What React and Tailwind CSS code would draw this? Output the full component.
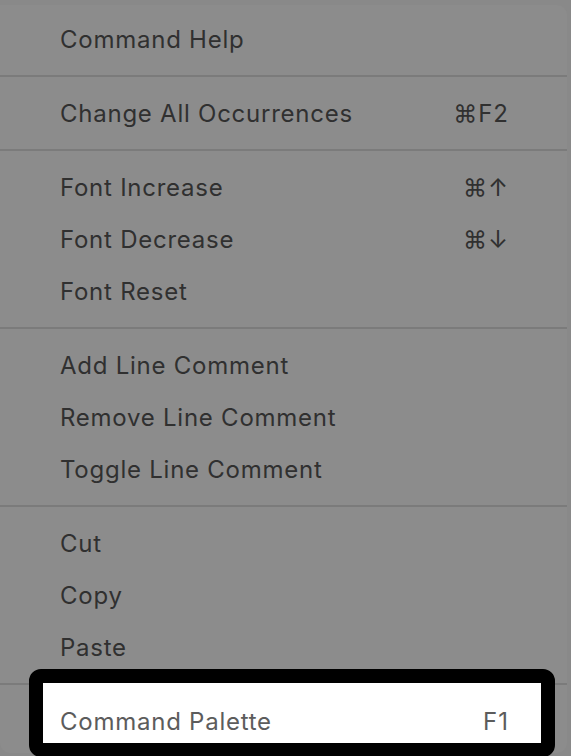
const sections = [
  [{ label: 'Command Help' }],
  [{ label: 'Change All Occurrences', key: '⌘F2' }],
  [
    { label: 'Font Increase', key: '⌘↑' },
    { label: 'Font Decrease', key: '⌘↓' },
    { label: 'Font Reset' },
  ],
  [
    { label: 'Add Line Comment' },
    { label: 'Remove Line Comment' },
    { label: 'Toggle Line Comment' },
  ],
  [{ label: 'Cut' }, { label: 'Copy' }, { label: 'Paste' }],
];

function Item({ label, shortcut, active }) {
  return (
    <div
      className={`relative z-10 h-[52px] flex items-center justify-between pl-[60px] pr-[58px] text-[24px] ${
        active ? 'text-[#5c5c5c]' : 'text-[#303030]'
      }`}
    >
      <span className="tracking-[0.75px]">{label}</span>
      {shortcut && <span className="tracking-[1px]">{shortcut}</span>}
    </div>
  );
}

export default function App() {
  return (
    <div
      className="relative w-[571px] h-[756px] overflow-hidden bg-[#898989] pt-[5px] pr-[4px]"
      style={{ fontFamily: 'Inter, "DejaVu Sans", sans-serif' }}
    >
      <div className="h-[748px] bg-[#8c8c8c] rounded-tr-[10px] rounded-br-[10px] rounded-bl-[10px] pt-[9px]">
        {sections.map((items, i) => (
          <div key={i}>
            {items.map((it) => (
              <Item key={it.label} label={it.label} shortcut={it.key} />
            ))}
            <div className="mt-[9px] mb-[11px] h-[2px] bg-[#7b7b7b]" />
          </div>
        ))}
        <Item label="Command Palette" shortcut="F1" active />
      </div>

      {/* highlight frame */}
      <div className="absolute left-[29px] top-[669px] w-[526px] h-[88px] border-[14px] border-black rounded-[12px] bg-white">
        <div className="w-full h-full rounded-tr-[4px] bg-white" />
      </div>
    </div>
  );
}
